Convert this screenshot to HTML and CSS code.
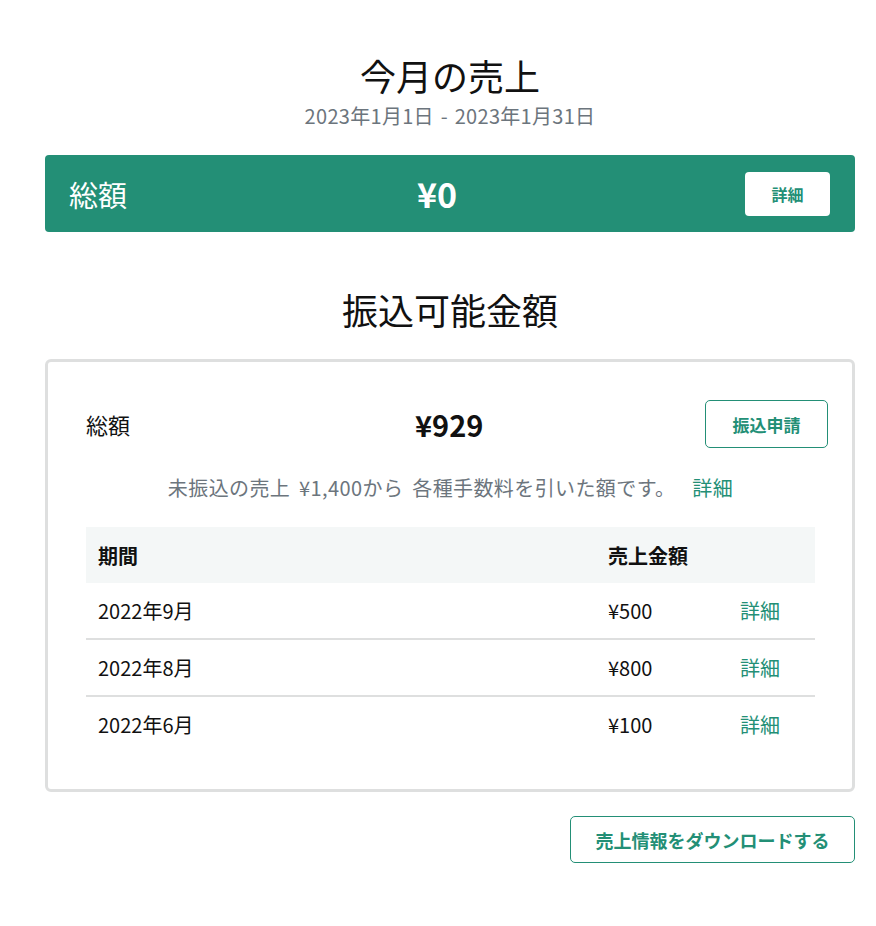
FILE: index.html
```html
<!DOCTYPE html>
<html lang="ja">
<head>
  <meta charset="UTF-8" />
  <meta name="viewport" content="width=device-width, initial-scale=1.0"/>
  <title>売上</title>
  <link rel="stylesheet" href="styles.css">
</head>
<body>

<div class="page">
  <!-- 今月の売上 -->
  <h1 class="title">今月の売上</h1>
  <p class="period">2023年1月1日 - 2023年1月31日</p>

  <div class="total-bar">
    <span class="total-label">総額</span>
    <span class="total-amount">¥0</span>
    <button class="btn-white">詳細</button>
  </div>

  <!-- 振込可能金額 -->
  <h2 class="title section-title">振込可能金額</h2>

  <div class="card">
    <div class="card-row">
      <span class="card-label">総額</span>
      <span class="card-amount">¥929</span>
      <button class="btn-outline btn-transfer">振込申請</button>
    </div>

    <p class="note">未振込の売上 ¥1,400から 各種手数料を引いた額です。 <a href="#" class="link">詳細</a></p>

    <table class="sales">
      <thead>
        <tr>
          <th class="col-period">期間</th>
          <th class="col-amount">売上金額</th>
          <th class="col-link"></th>
        </tr>
      </thead>
      <tbody>
        <tr>
          <td>2022年9月</td>
          <td>¥500</td>
          <td><a href="#" class="link">詳細</a></td>
        </tr>
        <tr>
          <td>2022年8月</td>
          <td>¥800</td>
          <td><a href="#" class="link">詳細</a></td>
        </tr>
        <tr>
          <td>2022年6月</td>
          <td>¥100</td>
          <td><a href="#" class="link">詳細</a></td>
        </tr>
      </tbody>
    </table>
  </div>

  <div class="actions">
    <button class="btn-outline btn-download">売上情報をダウンロードする</button>
  </div>
</div>

</body>
</html>
```

FILE: styles.css
```css
body {
  font-family: "Noto Sans CJK JP", "Noto Sans", sans-serif;
  background-color: #fff;
  color: #111;
  margin: 0;
}

.page {
  width: 810px;
  margin-left: 45px;
  padding-top: 51px;
}

.title {
  text-align: center;
  font-size: 36px;
  font-weight: 400;
  line-height: 48px;
  margin: 0;
}

.period {
  text-align: center;
  color: #6c757d;
  font-size: 20px;
  letter-spacing: 0.3px;
  word-spacing: 2px;
  line-height: 28px;
  margin: 3px 0 25px;
}

.total-bar {
  display: flex;
  align-items: center;
  height: 77px;
  padding: 0 25px 0 24px;
  background-color: #238f76;
  border-radius: 4px;
  color: #fff;
}

.total-label {
  font-size: 29px;
  width: 170px;
}

.total-amount {
  flex: 1;
  font-size: 34px;
  font-weight: 700;
  padding-left: 178px;
}

button {
  font-family: inherit;
  cursor: pointer;
}

.btn-white {
  width: 85px;
  height: 44px;
  border: none;
  border-radius: 4px;
  background: #fff;
  color: #238f76;
  font-weight: 700;
  font-size: 16px;
}

.section-title {
  margin-top: 53px;
  margin-bottom: 26px;
}

.card {
  border: 3px solid #dedfdf;
  border-radius: 6px;
  padding: 38px 37px 37px 38px;
}

.card-row {
  display: flex;
  align-items: center;
  margin-right: -13px;
}

.card-label {
  font-size: 22px;
  width: 200px;
}

.card-amount {
  flex: 1;
  font-size: 29px;
  font-weight: 700;
  padding-left: 129px;
}

.btn-outline {
  height: 48px;
  border: 1px solid #238f76;
  border-radius: 5px;
  background: #fff;
  color: #238f76;
  font-weight: 700;
}

.btn-transfer {
  width: 123px;
  font-size: 17px;
}

.note {
  text-align: center;
  color: #6c757d;
  font-size: 20px;
  letter-spacing: 0.4px;
  word-spacing: 4px;
  line-height: 30px;
  margin: 25px 0 24px;
}

.link {
  color: #238f76;
  text-decoration: none;
  margin-left: 8px;
}

.sales {
  width: 729px;
  border-collapse: collapse;
  font-size: 20px;
}

.sales th {
  background-color: #f4f7f7;
  text-align: left;
  font-weight: 700;
  height: 56px;
  padding: 0 12px;
}

.sales td {
  height: 55px;
  padding: 0 12px;
  border-bottom: 2px solid #dedfdf;
}

.sales tr:last-child td {
  border-bottom: none;
}

.sales td .link {
  margin-left: 0;
}

.col-period {
  width: 486px;
}

.col-amount {
  width: 108px;
}

.actions {
  display: flex;
  justify-content: flex-end;
  margin-top: 24px;
}

.btn-download {
  width: 285px;
  height: 47px;
  font-size: 18px;
}
```
